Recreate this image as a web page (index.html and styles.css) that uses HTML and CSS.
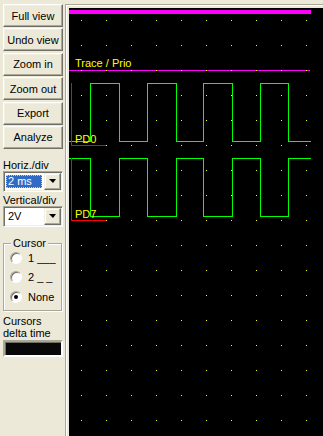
FILE: index.html
```html
<!DOCTYPE html>
<html lang="en">
<head>
    <meta charset="UTF-8">
    <meta name="viewport" content="width=device-width, initial-scale=1.0">
    <title>Logic Analyzer</title>
    <link rel="stylesheet" href="styles.css">
</head>
<body>
    <div class="app">
        <div class="panel">
            <div class="buttons">
                <button class="btn">Full view</button>
                <button class="btn">Undo view</button>
                <button class="btn">Zoom in</button>
                <button class="btn">Zoom out</button>
                <button class="btn">Export</button>
                <button class="btn">Analyze</button>
            </div>

            <div class="field-label label-horiz">Horiz./div</div>
            <div class="combo">
                <div class="combo-value"><span class="combo-sel">2 ms</span></div>
                <div class="combo-arrow"></div>
            </div>

            <div class="field-label label-vert">Vertical/div</div>
            <div class="combo">
                <div class="combo-value"><span class="combo-text">2V</span></div>
                <div class="combo-arrow"></div>
            </div>

            <fieldset class="group">
                <legend>Cursor</legend>
                <div class="radio-list">
                    <div class="radio-row"><span class="radio"></span>1 ___</div>
                    <div class="radio-row"><span class="radio"></span>2 _ _</div>
                    <div class="radio-row"><span class="radio checked"></span>None</div>
                </div>
            </fieldset>

            <div class="delta-label">Cursors<br>delta time</div>
            <div class="delta-box"></div>
        </div>

        <div class="display">
            <div class="scope">
                <svg class="scope-svg" width="254" height="428" viewBox="0 0 254 428">
                    <defs>
                        <pattern id="grid" x="12" y="12" width="25" height="25" patternUnits="userSpaceOnUse">
                            <rect width="1" height="1" fill="#ffff00"/>
                        </pattern>
                    </defs>
                    <rect x="0" y="2" width="242" height="4" fill="#ff00ff"/>
                    <rect x="0" y="62" width="241" height="1" fill="#ff00ff"/>
                    <rect width="254" height="428" fill="url(#grid)"/>

                    <text class="trace-label" x="6" y="59">Trace / Prio</text>

                    <path class="trace" d="M0 133.5 H21.5 V75.5 H50.5 V133.5 H78.5 V75.5 H107.5 V133.5 H134.5 V75.5 H163.5 V133.5 H191.5 V75.5 H219.5 V133.5 H242"/>
                    <path class="marker" d="M2.5 75 V137.5 H37"/>
                    <text class="trace-label" x="6" y="135">PD0</text>

                    <path class="trace" d="M0 150.5 H21.5 V208.5 H50.5 V150.5 H78.5 V208.5 H107.5 V150.5 H134.5 V208.5 H163.5 V150.5 H191.5 V208.5 H219.5 V150.5 H242"/>
                    <path class="marker" d="M2.5 150 V212.5 H37"/>
                    <text class="trace-label" x="6" y="210">PD7</text>
                </svg>
            </div>
        </div>
    </div>
</body>
</html>
```

FILE: styles.css
```css
* {
    margin: 0;
    padding: 0;
    box-sizing: border-box;
}

body {
    width: 323px;
    height: 436px;
    overflow: hidden;
    background: #ECE9D8;
    font-family: 'Liberation Sans', Arial, sans-serif;
    font-size: 11px;
    color: #000;
}

.app {
    display: flex;
    height: 100%;
}

.panel {
    width: 65px;
    flex-shrink: 0;
    padding: 4px 0 0 3px;
    display: flex;
    flex-direction: column;
}

.buttons {
    display: flex;
    flex-direction: column;
    gap: 1.4px;
}

.btn {
    width: 60px;
    height: 23px;
    font: inherit;
    color: #000;
    background: #ECE9D8;
    border: 1px solid;
    border-color: #fff #716F64 #716F64 #fff;
    box-shadow: inset -1px -1px #ACA899, inset 1px 1px #F1EFE2;
}

.field-label {
    line-height: 12px;
    white-space: nowrap;
}

.label-horiz {
    margin-top: 10px;
}

.label-vert {
    margin-top: 2px;
}

.combo {
    width: 60px;
    height: 21px;
    display: flex;
    padding: 1px;
    background: #fff;
    border: 1px solid;
    border-color: #ACA899 #fff #fff #ACA899;
    box-shadow: inset 1px 1px #716F64, inset -1px -1px #F1EFE2;
}

.combo-value {
    flex: 1;
    display: flex;
    align-items: center;
}

.combo-sel {
    width: 36px;
    height: 13px;
    margin-left: 1px;
    padding-left: 1px;
    line-height: 11px;
    background: #316AC5;
    color: #fff;
    border: 1px dotted #E6CF74;
}

.combo-text {
    padding-left: 3px;
}

.combo-arrow {
    width: 17px;
    height: 17px;
    display: flex;
    align-items: center;
    justify-content: center;
    background: #ECE9D8;
    border: 1px solid;
    border-color: #F1EFE2 #716F64 #716F64 #F1EFE2;
    box-shadow: inset -1px -1px #ACA899, inset 1px 1px #fff;
}

.combo-arrow::after {
    content: '';
    border-top: 4px solid #000;
    border-left: 4px solid transparent;
    border-right: 3px solid transparent;
}

.group {
    width: 59px;
    margin-top: 10px;
    padding: 0 0 4px 0;
    border: 1px solid #ACA899;
    box-shadow: inset 1px 1px #fff, 1px 1px #fff;
}

.group legend {
    margin-left: 7px;
    padding: 0 2px;
    line-height: 13px;
    background: #ECE9D8;
}

.radio-list {
    margin-top: -2px;
}

.radio-row {
    height: 19.5px;
    display: flex;
    align-items: center;
    gap: 6px;
    padding-left: 6px;
    white-space: nowrap;
}

.radio {
    width: 12px;
    height: 12px;
    border-radius: 50%;
    background: #fff;
    border: 1px solid;
    border-color: #ACA899 #fff #fff #ACA899;
    box-shadow: inset 1px 1px #716F64;
    display: flex;
    align-items: center;
    justify-content: center;
}

.radio.checked::after {
    content: '';
    width: 4px;
    height: 4px;
    border-radius: 50%;
    background: #000;
}

.delta-label {
    margin-top: 4px;
    line-height: 12px;
}

.delta-box {
    width: 60px;
    height: 17px;
    margin-top: 1px;
    background: #080808;
    border: 2px solid;
    border-color: #ACA899 #fff #fff #ACA899;
    box-shadow: inset 1px 1px #716F64;
}

.display {
    flex: 1;
    margin-top: 4px;
    padding: 3px 0 0 3px;
    border-top: 1px solid #ACA899;
    border-left: 1px solid #ACA899;
    box-shadow: inset 1px 1px #fff;
    display: flex;
    overflow: hidden;
}

.scope {
    flex: 1;
    background: #000;
}

.scope-svg {
    display: block;
    shape-rendering: crispEdges;
}

.trace {
    fill: none;
    stroke: #00FF00;
    stroke-width: 1;
}

.marker {
    fill: none;
    stroke: #FF0000;
    stroke-width: 1;
}

.trace-label {
    fill: #FFFF00;
    font-family: 'Liberation Sans', Arial, sans-serif;
    font-size: 11px;
}
```
